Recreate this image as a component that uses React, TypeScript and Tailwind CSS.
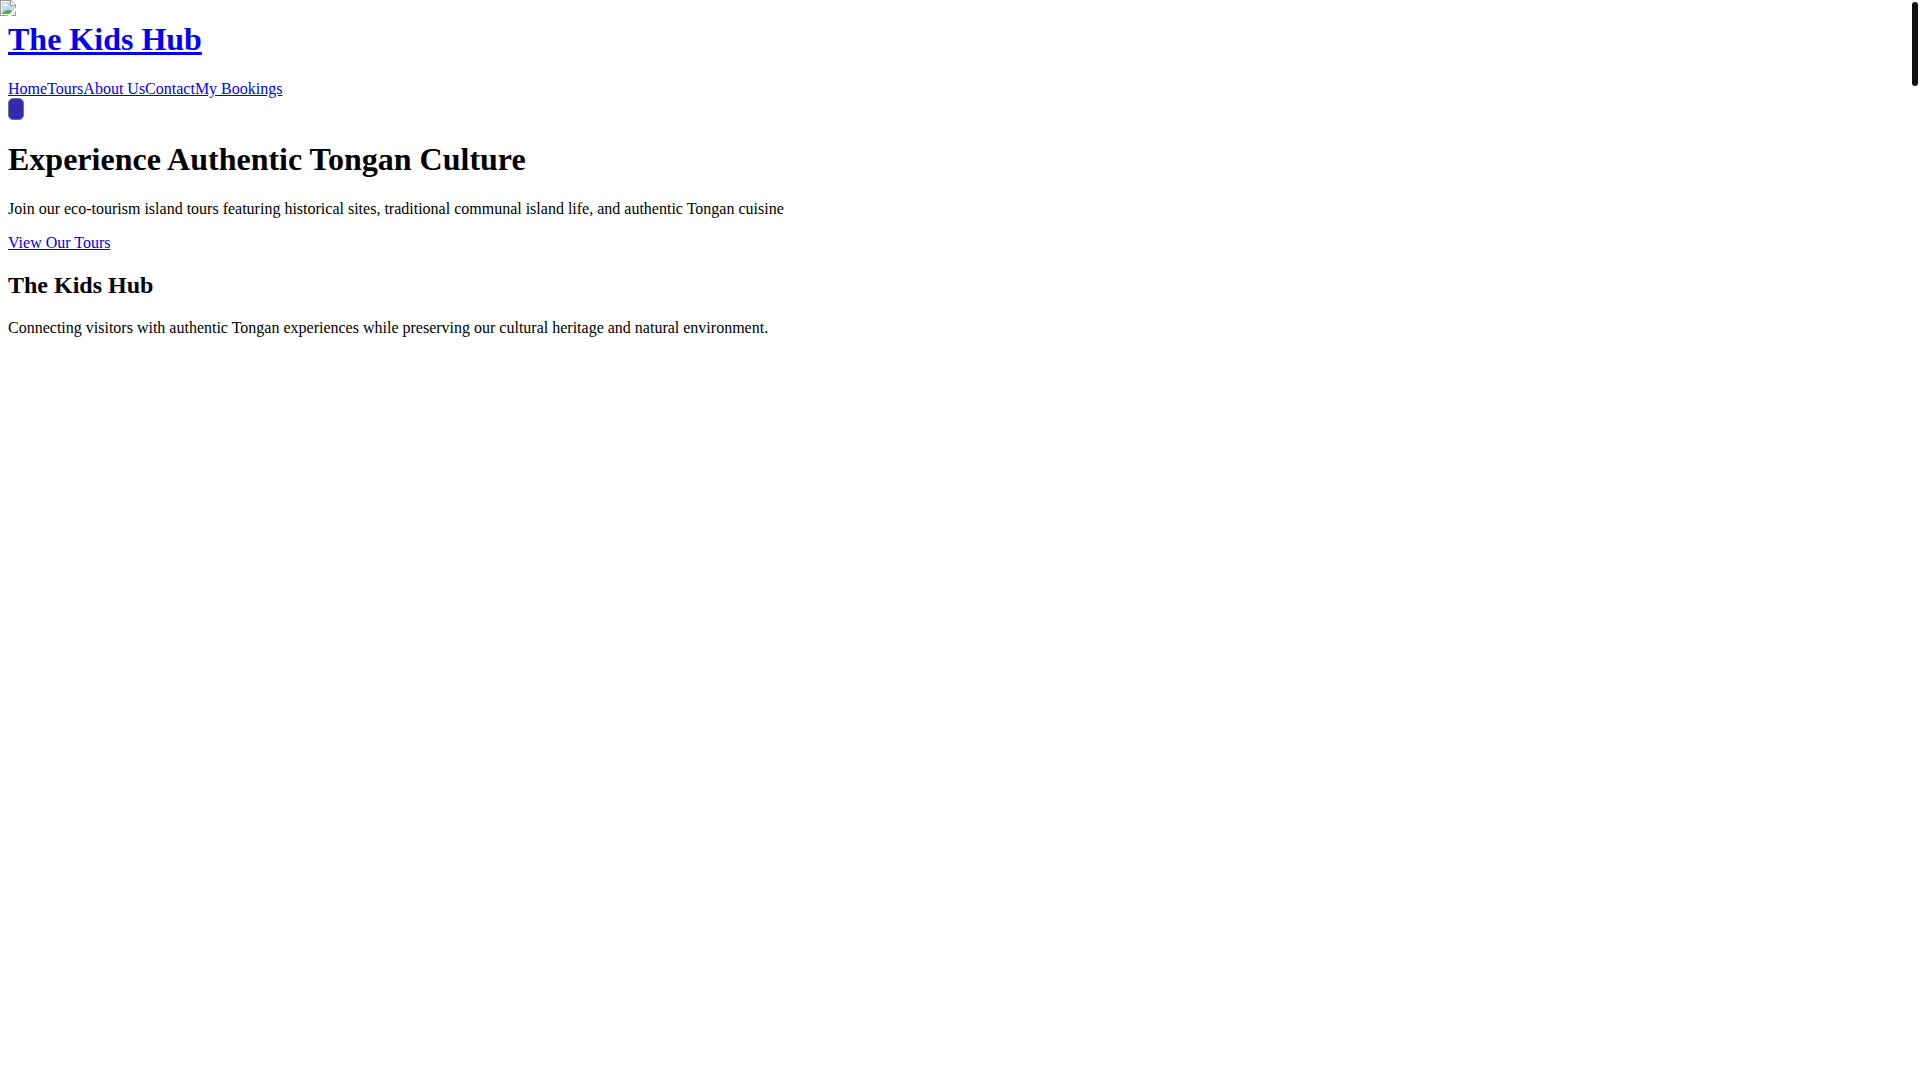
const navItems = ["Home", "Tours", "About Us", "Contact", "My Bookings"];

function MissingImage() {
  return (
    <svg className="absolute top-0 left-0 h-4 w-4" viewBox="0 0 16 16" role="img" aria-label="Missing image">
      <path d="M0 0H11L16 5V16H0Z" fill="#999" />
      <path d="M1 1H11V5H15V15H1Z" fill="#fff" />
      <path d="M2 2H10V6H14V14H2Z" fill="#c2d5f7" />
      <path d="M3 6V5L4 4H5L6 3L7 5H8V6Z" fill="#fff" />
      <path d="M2 14V13.5C4 11 6 10 8.5 10C11 10 13 11.5 14 13V14Z" fill="#5aac3c" />
      <path d="M11 1L15 5H11Z" fill="#fff" />
      <path d="M10.5 1V5.5H15.5" fill="none" stroke="#999" />
      <path d="M16 7.5V11L11 16H7.5Z" fill="#fff" />
    </svg>
  );
}

export default function App() {
  return (
    <div className="relative px-2 pt-[21px] font-['Liberation_Serif',serif] text-base leading-[18px] text-black">
      <MissingImage />
      <header>
        <h1 className="text-[32px] leading-[37px] font-bold">
          <a href="#" className="text-[#0000ee] underline">The Kids Hub</a>
        </h1>
        <nav className="mt-[22px] flex">
          {navItems.map((item) => (
            <a key={item} href="#" className="text-[#0000ee] underline">{item}</a>
          ))}
        </nav>
        <button type="button" aria-label="Menu" className="block h-[22px] w-4 rounded-[5px] border border-[#767676] bg-[#3429b3]" />
      </header>
      <main>
        <h2 className="mt-[21px] text-[32px] leading-[37px] font-bold">Experience Authentic Tongan Culture</h2>
        <p className="mt-[22px]">Join our eco-tourism island tours featuring historical sites, traditional communal island life, and authentic Tongan cuisine</p>
        <a href="#" className="mt-4 inline-block text-[#0000ee] underline">View Our Tours</a>
      </main>
      <footer>
        <h2 className="mt-5 text-2xl leading-[27px] font-bold">The Kids Hub</h2>
        <p className="mt-5">Connecting visitors with authentic Tongan experiences while preserving our cultural heritage and natural environment.</p>
      </footer>
      <div className="fixed top-[2px] right-[2px] h-[84px] w-[6px] rounded-full bg-[#111]" />
    </div>
  );
}
